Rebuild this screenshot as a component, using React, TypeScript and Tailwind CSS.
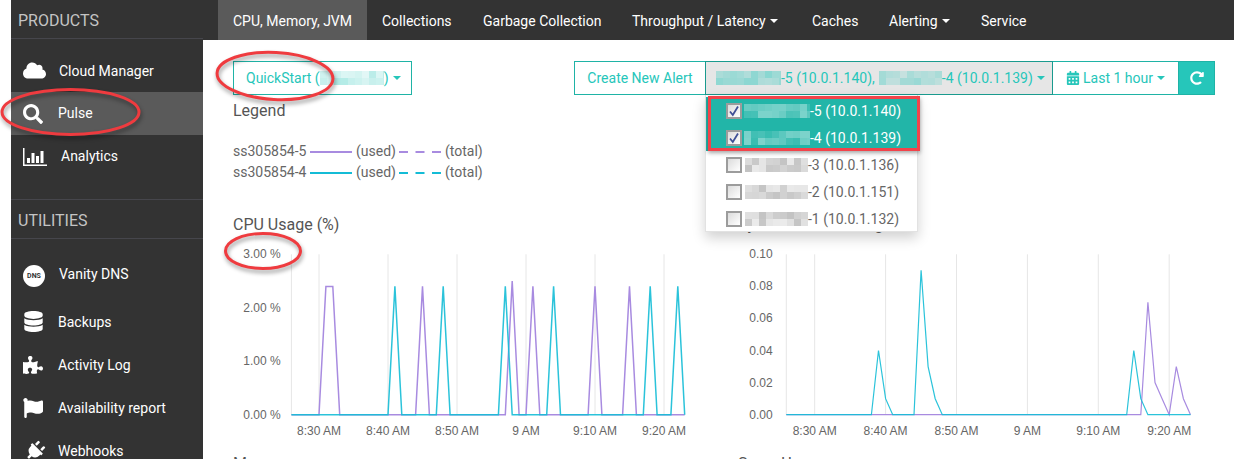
import { FaCloud, FaSearch, FaDatabase, FaPuzzlePiece, FaFlag, FaPlug, FaCalendarAlt, FaRedoAlt } from "react-icons/fa";

const PURPLE = "#a88be0";
const CYAN = "#14bcd6";

function Caret({ className = "border-t-[#26c6ba]" }: { className?: string }) {
  return <span className={`ml-1 inline-block h-0 w-0 border-x-4 border-t-4 border-x-transparent align-middle ${className}`} />;
}

// pixelated hostnames from the screenshot
function Blur({ width, color, low, high, seed }: { width: number; color: string; low: number; high: number; seed: number }) {
  const cells = [];
  for (let r = 0; r < 2; r++) {
    for (let c = 0; c < Math.ceil(width / 7); c++) {
      const n = Math.abs(Math.sin((c + 1) * 12.9 + (r + 1) * 78.2 + seed) * 437.5) % 1;
      cells.push(<rect key={`${r}-${c}`} x={c * 7} y={r * 7} width={7} height={7} fill={color} opacity={low + (high - low) * n} />);
    }
  }
  return (
    <svg width={width} height={14} className="inline-block shrink-0 align-middle">
      {cells}
    </svg>
  );
}

function AnalyticsIcon() {
  return (
    <svg width="24" height="18" viewBox="0 0 24 18" fill="#fff">
      <rect x="0" y="0" width="1.5" height="18" />
      <rect x="0" y="16.5" width="24" height="1.5" />
      <rect x="4" y="10" width="3" height="5" />
      <rect x="8.5" y="5" width="3" height="10" />
      <rect x="13" y="8" width="3" height="7" />
      <rect x="17.5" y="3" width="3" height="12" />
    </svg>
  );
}

function DnsIcon() {
  return (
    <span className="flex h-[22px] w-[22px] items-center justify-center rounded-full bg-white text-[7px] font-bold text-[#333]">DNS</span>
  );
}

const products = [
  { label: "Cloud Manager", icon: <FaCloud size={23} />, box: "w-9" },
  { label: "Pulse", icon: <FaSearch size={20} />, box: "w-[35px]", active: true, text: "pb-[1px]" },
  { label: "Analytics", icon: <AnalyticsIcon />, box: "w-[38px]", text: "pb-[1px]" },
];

const utilities = [
  { label: "Vanity DNS", icon: <DnsIcon />, box: "w-9", row: "h-12", text: "pb-[5px]" },
  { label: "Backups", icon: <FaDatabase size={21} />, box: "w-[35px]", row: "h-[43px]" },
  { label: "Activity Log", icon: <FaPuzzlePiece size={20} />, box: "w-[35px]", row: "h-[43px]" },
  { label: "Availability report", icon: <FaFlag size={20} />, box: "w-[35px]", row: "h-[43px]" },
  { label: "Webhooks", icon: <FaPlug size={20} className="rotate-45" />, box: "w-[35px] pl-[2px]", row: "h-[43px]" },
];

const tabs = [
  { label: "CPU, Memory, JVM", w: "w-[149px]", active: true },
  { label: "Collections", w: "w-[101px]" },
  { label: "Garbage Collection", w: "w-[149px]" },
  { label: "Throughput / Latency", w: "w-[180px]", caret: true },
  { label: "Caches", w: "w-[77px]" },
  { label: "Alerting", w: "w-[92px]", caret: true },
  { label: "Service", w: "w-[80px]" },
];

const nodes = [
  { id: "-5 (10.0.1.140)", checked: true, seed: 1 },
  { id: "-4 (10.0.1.139)", checked: true, seed: 2 },
  { id: "-3 (10.0.1.136)", seed: 3 },
  { id: "-2 (10.0.1.151)", seed: 4 },
  { id: "-1 (10.0.1.132)", seed: 5 },
];

const timeLabels = [
  { m: 0, t: "8:30 AM" },
  { m: 10, t: "8:40 AM" },
  { m: 20, t: "8:50 AM" },
  { m: 30, t: "9 AM" },
  { m: 40, t: "9:10 AM" },
  { m: 50, t: "9:20 AM" },
];

type Peaks = Record<number, number>;

function spikes(mins: number[], top: number): Peaks {
  const out: Peaks = {};
  mins.forEach((m) => (out[m] = top));
  return out;
}

function Chart(props: {
  axisX: number;
  zeroMin: number;
  perMin: number;
  labelX: number;
  max: number;
  ticks: { v: number; t: string }[];
  purple: Peaks;
  cyan: Peaks;
  stroke: number;
}) {
  const { axisX, zeroMin, perMin, labelX, max, ticks, purple, cyan, stroke } = props;
  const zero = 173.7;
  const top = 13.3;
  const y = (v: number) => zero - (v / max) * (zero - top);
  const line = (p: Peaks) => {
    const pts = [];
    for (let m = -4; m <= 53; m++) pts.push(`${(zeroMin + m * perMin).toFixed(1)},${y(p[m] || 0).toFixed(1)}`);
    return pts.join(" ");
  };
  return (
    <svg width="480" height="212" className="block" fontFamily="'Liberation Sans', Arial, sans-serif" fontSize="12" fill="#666">
      <line x1={axisX} x2={axisX} y1={top} y2={zero} stroke="#e6e6e6" />
      {timeLabels.map((l) => {
        const x = zeroMin + l.m * perMin;
        return (
          <g key={l.t}>
            <line x1={x} x2={x} y1={top} y2={zero} stroke="#e6e6e6" />
            <text x={x} y={194} textAnchor="middle">{l.t}</text>
          </g>
        );
      })}
      {ticks.map((t) => (
        <text key={t.t} x={labelX} y={y(t.v) + 4} textAnchor="end">{t.t}</text>
      ))}
      <polyline points={line(purple)} fill="none" stroke={PURPLE} strokeWidth={stroke} />
      <polyline points={line(cyan)} fill="none" stroke={CYAN} strokeWidth={stroke} strokeOpacity="0.9" />
    </svg>
  );
}

function Checkbox({ checked }: { checked?: boolean }) {
  return (
    <span className="flex h-4 w-4 shrink-0 items-center justify-center border-2 border-[#9c9c9c] bg-gradient-to-br from-[#dcdcdc] to-white">
      {checked && (
        <svg width="12" height="12" viewBox="0 0 12 12">
          <path d="M2 6.5 L4.8 10 L10 1.5" fill="none" stroke="#3f4f96" strokeWidth="1.8" />
        </svg>
      )}
    </span>
  );
}

function NavRow({ label, icon, box, row, active, text }: { label: string; icon: React.ReactNode; box: string; row?: string; active?: boolean; text?: string }) {
  return (
    <div className={`flex items-center pl-3 text-sm text-white ${row || "h-[43px]"} ${active ? "bg-[#5a5a5a]" : ""}`}>
      <span className={`flex shrink-0 items-center ${box}`}>{icon}</span>
      <span className={text}>{label}</span>
    </div>
  );
}

export default function App() {
  return (
    <div className="relative flex h-[459px] w-[1234px] overflow-hidden bg-white font-['Roboto',sans-serif]">
      <aside className="ml-[11px] w-[192px] shrink-0 bg-[#333]">
        <div className="flex h-[39px] items-center border-b border-[#46464c] pl-[7px] pt-[3px] text-base text-[#c4c4c4]">PRODUCTS</div>
        <div className="flex h-[161px] flex-col border-b border-[#46464c] pt-[10px]">
          {products.map((p) => (
            <NavRow key={p.label} {...p} />
          ))}
        </div>
        <div className="flex h-[39px] items-center border-b border-[#46464c] pl-[7px] pt-[3px] text-base text-[#c4c4c4]">UTILITIES</div>
        <div className="flex flex-col pt-[13px]">
          {utilities.map((u) => (
            <NavRow key={u.label} {...u} />
          ))}
        </div>
      </aside>

      <main className="flex min-w-0 flex-1 flex-col">
        <nav className="flex h-10 shrink-0 items-center bg-[#333] pl-[15px] text-sm text-white">
          {tabs.map((t) => (
            <div key={t.label} className={`flex h-10 shrink-0 items-center pl-[15px] pt-[2px] ${t.w} ${t.active ? "bg-[#5a5a5a]" : ""}`}>
              {t.label}
              {t.caret && <Caret className="border-t-white" />}
            </div>
          ))}
        </nav>

        <div className="pl-[30px] pr-[19px] pt-[21px]">
          <div className="flex h-[34px] items-stretch justify-between text-sm text-[#26c6ba]">
            <button className="flex w-[179px] items-center border border-[#1fb3a6] pl-3">
              QuickStart (<Blur width={64} color="#26c6ba" low={0.12} high={0.38} seed={7} />)
              <Caret />
            </button>
            <div className="flex items-stretch">
              <button className="w-[131px] border border-r-0 border-[#1fb3a6]">Create New Alert</button>
              <div className="relative w-[348px]">
                <button className="flex h-full w-full items-center border border-[#1a9a8e] bg-[#e6e6e6] pl-[10px]">
                  <Blur width={65} color="#26c6ba" low={0.25} high={0.5} seed={8} />
                  -5 (10.0.1.140),
                  <span className="w-1" />
                  <Blur width={63} color="#26c6ba" low={0.15} high={0.4} seed={9} />
                  -4 (10.0.1.139)
                  <Caret />
                </button>
                <div className="absolute left-0 top-full z-10 h-[137px] w-[213px] border-x border-b border-[#e2e2e2] bg-white pt-[2px] text-[#666] shadow-[0_6px_12px_rgba(0,0,0,0.18)]">
                  {nodes.map((n) => (
                    <div key={n.id} className={`flex h-[27px] items-center pl-5 ${n.checked ? "bg-[#22b5a8] text-white" : ""}`}>
                      <Checkbox checked={n.checked} />
                      {n.checked ? (
                        <span className="ml-[2px] flex items-center"><Blur width={66} color="#ffffff" low={0.1} high={0.42} seed={n.seed} /></span>
                      ) : (
                        <span className="ml-[3px] flex items-center"><Blur width={63} color="#999999" low={0.18} high={0.6} seed={n.seed} /></span>
                      )}
                      <span className="whitespace-nowrap">{n.id}</span>
                    </div>
                  ))}
                  <div className="absolute left-[2px] top-[1px] h-[55px] w-[212px] border-[3px] border-[#f2434a] shadow-[0_2px_4px_rgba(0,0,0,0.35)]" />
                </div>
              </div>
              <button className="flex w-[125px] items-center justify-center border-y border-[#1fb3a6]">
                <FaCalendarAlt size={14} className="mr-[3px]" />
                Last 1 hour
                <Caret />
              </button>
              <button className="flex w-[37px] items-center justify-center border border-[#1fb3a6] bg-[#26c6ba] text-white">
                <FaRedoAlt size={14} />
              </button>
            </div>
          </div>

          <h3 className="mt-[5px] h-[22px] text-base leading-[22px] text-[#555]">Legend</h3>
          <div className="mt-[19px] flex flex-col text-sm leading-[21px] text-[#666]">
            {[
              { name: "ss305854-5", fill: "bg-[#a88be0]", dash: PURPLE },
              { name: "ss305854-4", fill: "bg-[#14bcd6]", dash: CYAN },
            ].map((s) => (
              <div key={s.name} className="flex h-[21px] items-center">
                <span className="w-[73px] whitespace-nowrap">{s.name}</span>
                <span className={`ml-1 h-[2px] w-[42px] ${s.fill}`} />
                <span className="ml-1 w-[39px]">(used)</span>
                <svg width="42" height="2" className="ml-1">
                  <line x1="0" x2="42" y1="1" y2="1" stroke={s.dash} strokeWidth="2" strokeDasharray="9 7.5" />
                </svg>
                <span className="ml-1">(total)</span>
              </div>
            ))}
          </div>

          <div className="mt-[31px] grid grid-cols-[505px_1fr]">
            <div>
              <h3 className="h-[22px] text-base leading-[22px] text-[#555]">CPU Usage (%)</h3>
              <div className="mt-[5px]">
                <Chart
                  axisX={58.4}
                  zeroMin={86}
                  perMin={6.9}
                  labelX={47.7}
                  max={3}
                  ticks={[
                    { v: 3, t: "3.00 %" },
                    { v: 2, t: "2.00 %" },
                    { v: 1, t: "1.00 %" },
                    { v: 0, t: "0.00 %" },
                  ]}
                  purple={{ ...spikes([1, 2, 15, 31, 40, 45], 2.4), 28: 2.5 }}
                  cyan={spikes([11, 18, 27, 34, 48, 52], 2.4)}
                  stroke={1.5}
                />
              </div>
              <h3 className="h-[22px] text-base leading-[22px] text-[#555]">Memory</h3>
            </div>
            <div>
              <h3 className="h-[22px] text-base leading-[22px] text-[#555]">System Load Average</h3>
              <div className="mt-[5px]">
                <Chart
                  axisX={48.3}
                  zeroMin={76.7}
                  perMin={7.09}
                  labelX={34.7}
                  max={0.1}
                  ticks={[
                    { v: 0.1, t: "0.10" },
                    { v: 0.08, t: "0.08" },
                    { v: 0.06, t: "0.06" },
                    { v: 0.04, t: "0.04" },
                    { v: 0.02, t: "0.02" },
                    { v: 0, t: "0.00" },
                  ]}
                  purple={{ 47: 0.07, 48: 0.02, 49: 0.01, 51: 0.03, 52: 0.01 }}
                  cyan={{ 9: 0.04, 10: 0.01, 15: 0.09, 16: 0.03, 17: 0.01, 45: 0.04, 46: 0.01 }}
                  stroke={1.2}
                />
              </div>
              <h3 className="h-[22px] text-base leading-[22px] text-[#555]">Swap Usage</h3>
            </div>
          </div>
        </div>
      </main>

      {/* red annotation rings drawn on top of the screenshot */}
      <svg width="1234" height="459" className="pointer-events-none absolute left-0 top-0 z-20 drop-shadow-[1px_3px_2px_rgba(0,0,0,0.4)]" fill="none" stroke="#ef3b3f" strokeWidth="3">
        <ellipse cx="275" cy="76" rx="58" ry="23.5" transform="rotate(3 275 76)" />
        <ellipse cx="70.5" cy="112" rx="68.5" ry="22.5" />
        <ellipse cx="263" cy="251" rx="37.5" ry="17.5" />
      </svg>
    </div>
  );
}
